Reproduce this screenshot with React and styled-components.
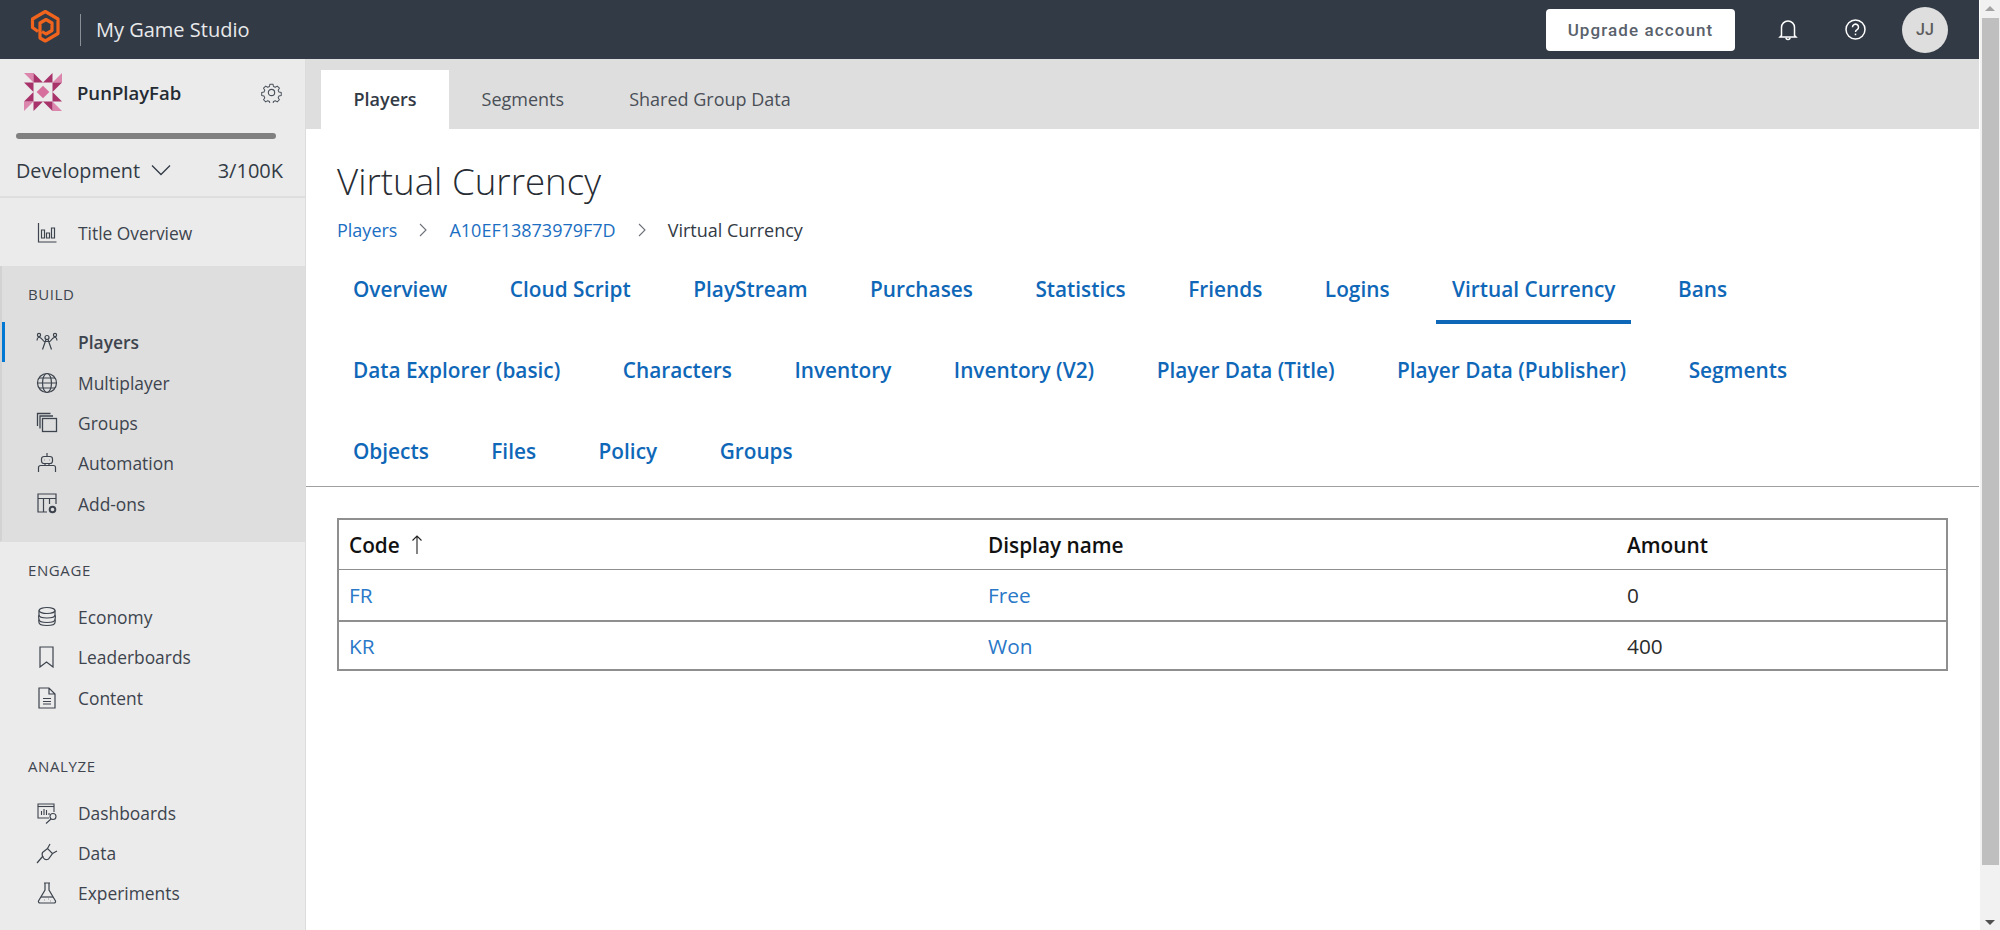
import { Fragment } from 'react';
import styled, { createGlobalStyle } from 'styled-components';

const GlobalStyle = createGlobalStyle`
  html, body {
    margin: 0;
    height: 100%;
    overflow: hidden;
    background: #fff;
    font-family: 'Open Sans', 'Noto Sans', sans-serif;
  }
  * {
    box-sizing: border-box;
  }
`;

const Page = styled.div`
  display: flex;
  width: 2000px;
  height: 930px;
  overflow: hidden;
`;

const Frame = styled.div`
  flex: 1;
  display: flex;
  flex-direction: column;
  min-width: 0;
`;

const TopBar = styled.header`
  height: 59px;
  flex: none;
  display: flex;
  align-items: center;
  background: #323a45;
  padding: 0 31px 0 26px;
`;

const BrandMark = styled.svg`
  flex: none;
  margin-bottom: 3px;
`;

const BrandDivider = styled.span`
  width: 1px;
  height: 32px;
  margin: 0 15px 0 14px;
  background: #8b9097;
`;

const StudioName = styled.span`
  flex: 1;
  color: #e8e9eb;
  font-size: 20px;
`;

const UpgradeButton = styled.button`
  width: 189px;
  height: 42px;
  border: 0;
  border-radius: 4px;
  background: #fff;
  color: #59616b;
  font-family: 'Roboto', sans-serif;
  font-size: 17px;
  font-weight: 500;
  letter-spacing: 1.1px;
`;

const TopIcon = styled.span`
  display: flex;
  margin-left: ${(p) => p.$gap}px;
  color: #fff;
`;

const Avatar = styled.span`
  width: 46px;
  height: 46px;
  margin-left: 36px;
  display: flex;
  align-items: center;
  justify-content: center;
  border-radius: 50%;
  background: #dedede;
  color: #5c5c5c;
  font-family: 'Roboto', sans-serif;
  font-size: 16px;
  font-weight: 500;
`;

const Body = styled.div`
  flex: 1;
  display: flex;
  min-height: 0;
`;

const Sidebar = styled.aside`
  width: 306px;
  flex: none;
  background: #ebebeb;
  border-right: 1px solid #dcdcdc;
  color: #323a45;
`;

const TitleBox = styled.div`
  height: 139px;
  border-bottom: 2px solid #dedede;
  padding: 14px 16px 0;
`;

const TitleRow = styled.div`
  display: flex;
  align-items: center;
  height: 38px;
  padding: 0 7px 0 8px;
`;

const TitleName = styled.span`
  flex: 1;
  margin-left: 15px;
  font-size: 18.5px;
  font-weight: 600;
  color: #252b33;
`;

const ProgressBar = styled.div`
  width: 260px;
  height: 5.5px;
  margin-top: 22px;
  border-radius: 3px;
  background: #808080;
`;

const EnvRow = styled.div`
  display: flex;
  align-items: center;
  margin-top: 18px;
  font-size: 19.8px;
  line-height: 27px;
`;

const EnvName = styled.span`
  margin-right: 10px;
`;

const EnvCount = styled.span`
  margin-left: auto;
  padding-right: 6px;
  font-size: 20px;
`;

const Section = styled.div`
  padding: ${(p) => p.$pad};
  background: ${(p) => (p.$active ? '#dedede' : 'transparent')};
  border-left: ${(p) => (p.$active ? '2px solid #d2d2d2' : '0')};
  border-bottom: ${(p) => (p.$active ? '2px solid #dedede' : '0')};
`;

const SectionLabel = styled.div`
  height: 20px;
  line-height: 20px;
  margin: 0 0 ${(p) => p.$below}px ${(p) => p.$left}px;
  font-size: 15px;
  letter-spacing: 0.6px;
  color: #3f4650;
`;

const NavItem = styled.div`
  position: relative;
  height: 40.3px;
  display: flex;
  align-items: center;
  padding-left: ${(p) => p.$left}px;
  font-size: 17.4px;
  font-weight: ${(p) => (p.$selected ? 600 : 400)};
  color: #3d444e;

  &::before {
    content: '';
    display: ${(p) => (p.$selected ? 'block' : 'none')};
    position: absolute;
    left: 0;
    top: 0;
    width: 3px;
    height: 40px;
    background: #0078d4;
  }
`;

const NavIcon = styled.span`
  width: 22px;
  height: 22px;
  display: flex;
  margin-right: 20px;
  color: #3d444e;
`;

const Main = styled.main`
  flex: 1;
  min-width: 0;
  background: #fff;
`;

const SubTabs = styled.div`
  height: 70px;
  display: flex;
  align-items: flex-end;
  padding-left: 15px;
  background: #dedede;
`;

const SubTab = styled.div`
  height: 59px;
  display: flex;
  align-items: center;
  padding: 0 32.5px 2px;
  background: ${(p) => (p.$selected ? '#fff' : 'transparent')};
  font-size: 18px;
  font-weight: ${(p) => (p.$selected ? 600 : 400)};
  color: ${(p) => (p.$selected ? '#323a45' : '#4a4f57')};
`;

const Heading = styled.div`
  padding: 26px 31px 0;
`;

const Title = styled.h1`
  margin: 0;
  font-size: 36.7px;
  line-height: 52px;
  font-weight: 300;
  color: #272c33;
`;

const Crumbs = styled.nav`
  display: flex;
  align-items: center;
  height: 24px;
  margin-top: 11px;
  font-size: 18px;
`;

const Crumb = styled.span`
  color: ${(p) => (p.$current ? '#323a45' : '#1b6ec2')};
`;

const CrumbSep = styled.span`
  display: flex;
  width: 52px;
  justify-content: center;
  color: #6b7079;
`;

const TabGroup = styled.div`
  display: flex;
  flex-wrap: wrap;
  align-content: flex-start;
  height: 245px;
  padding: 18px 31px 0;
  border-bottom: 1px solid #a0a0a0;
`;

const PageTab = styled.div`
  height: 64px;
  margin: 0 30.5px 17px 0;
  display: flex;
  align-items: center;
  padding: 0 16px 2px;
  font-size: 20.8px;
  font-weight: 600;
  color: #0f67b8;
  border-bottom: 4px solid ${(p) => (p.$selected ? '#0f67b8' : 'transparent')};
`;

const TabBreak = styled.div`
  flex-basis: 100%;
  height: 0;
`;

const TableWrap = styled.div`
  padding: 31px 31px 0;
`;

const Table = styled.div`
  border: 2px solid #8f8f8f;
`;

const Row = styled.div`
  display: grid;
  grid-template-columns: 639px 639px 1fr;
  height: ${(p) => p.$h}px;
  align-items: center;
  padding-left: 10px;
  border-top: ${(p) => (p.$line ? `${p.$line}px solid #8f8f8f` : '0')};
`;

const HeadCell = styled.div`
  display: flex;
  align-items: center;
  font-size: 20.8px;
  font-weight: 600;
  color: #111;
`;

const SortArrow = styled.span`
  display: flex;
  margin-left: 4px;
  color: #222;
`;

const LinkCell = styled.div`
  font-size: 20.8px;
  color: #2a78c8;
`;

const ValueCell = styled.div`
  font-size: 20.8px;
  color: #2b2b2b;
`;

const Scrollbar = styled.div`
  width: 21px;
  flex: none;
  display: flex;
  flex-direction: column;
  align-items: center;
  background: #f1f1f1;
  border-left: 1px solid #fff;
`;

const ScrollUp = styled.span`
  flex: none;
  height: 5px;
  width: 0;
  margin: 6px 0 7px;
  border-left: 5px solid transparent;
  border-right: 5px solid transparent;
  border-bottom: 5px solid #a3a3a3;
`;

const ScrollThumb = styled.span`
  flex: none;
  width: 17px;
  height: 847px;
  background: #bfbfbf;
`;

const ScrollDown = styled.span`
  flex: none;
  height: 5px;
  width: 0;
  margin-top: 55px;
  border-left: 5px solid transparent;
  border-right: 5px solid transparent;
  border-top: 5px solid #505050;
`;

const Line = ({ size = 22, children, sw = 1.2 }) => (
  <svg width={size} height={size} viewBox="0 0 22 22" fill="none" stroke="currentColor" strokeWidth={sw}>
    {children}
  </svg>
);

const BrandLogo = () => (
  <BrandMark width="40" height="44" viewBox="26 6 40 44" fill="none" stroke="#f0641e" strokeWidth="3.2" strokeLinejoin="round">
    <path d="M38 31.5L32.5 27.5V19L45.3 11.5 58 19V33.5L45.3 41 40 38V23L46 19.5 52 23V30.5L46 34 42 31.5" />
  </BrandMark>
);

const TitleLogo = () => (
  <svg width="38" height="38" viewBox="0 0 38 38">
    <rect x="14.5" y="14.5" width="9" height="9" fill="#d66f9c" transform="rotate(45 19 19)" />
    {[0, 90, 180, 270].map((deg) => (
      <g key={deg} transform={`rotate(${deg} 19 19)`}>
        <path d="M0 0H9.5V9.5Z" fill="#dd86ad" />
        <path d="M9.5 0L19 9.5H9.5Z" fill="#a8336a" />
        <path d="M0 9.5H9.5V19Z" fill="#a8336a" />
      </g>
    ))}
  </svg>
);

const Gear = () => (
  <svg width="21" height="21" viewBox="0 0 24 24" fill="none" stroke="#4b525c" strokeWidth="1.3" strokeLinejoin="round">
    <path d="M10 1.5h4l.6 3 2.3 1 2.6-1.6 2.8 2.8-1.6 2.6 1 2.3 3 .6v4l-3 .6-1 2.3 1.6 2.6-2.8 2.8-2.6-1.6-2.3 1-.6 3h-4l-.6-3-2.3-1-2.6 1.6-2.8-2.8 1.6-2.6-1-2.3-3-.6v-4l3-.6 1-2.3-1.6-2.6 2.8-2.8 2.6 1.6 2.3-1z" transform="translate(1.4 1.2) scale(0.88)" />
    <circle cx="12" cy="12" r="3.6" />
  </svg>
);

const Chevron = () => (
  <svg width="22" height="14" viewBox="0 0 22 14" fill="none" stroke="#323a45" strokeWidth="1.3">
    <path d="M2 2.5l9 9 9-9" />
  </svg>
);

const CrumbChevron = () => (
  <svg width="10" height="14" viewBox="0 0 10 14" fill="none" stroke="currentColor" strokeWidth="1.1">
    <path d="M2 1l6 6-6 6" />
  </svg>
);

const Bell = () => (
  <svg width="20" height="22" viewBox="0 0 20 22" fill="none" stroke="currentColor" strokeWidth="1.5">
    <path d="M3.5 16.5V8.5a6.5 6.5 0 0 1 13 0v8l1.5 1.5H2z" />
    <path d="M8 18.5a2 2 0 0 0 4 0" />
  </svg>
);

const Help = () => (
  <svg width="21" height="21" viewBox="0 0 21 21" fill="none" stroke="currentColor" strokeWidth="1.5">
    <circle cx="10.5" cy="10.5" r="9.5" />
    <path d="M7.5 8.2a3 3 0 1 1 4.6 2.5c-1 .6-1.6 1.2-1.6 2.3" />
    <path d="M10.5 14.6v1.6" />
  </svg>
);

const icons = {
  overview: (
    <Line>
      <path d="M2.5 1v19h18" />
      <path d="M5.5 16V8h3v8zM10.5 16V11h3v5zM15.5 16V6h3v10z" />
    </Line>
  ),
  players: (
    <Line>
      <circle cx="11" cy="6.5" r="2" />
      <path d="M6.5 18.500l3.500-10M15.500 18.500l-3.500-10M8 10.500h6" />
      <circle cx="3" cy="4" r="1.600" />
      <circle cx="19" cy="4" r="1.600" />
      <path d="M1 9.500c0-1.500 .6-3 2-3.500 1.500 .3 3 2 5 4.500M21 9.500c0-1.500-.6-3-2-3.500-1.500 .3-3 2-5 4.500" />
    </Line>
  ),
  globe: (
    <Line>
      <circle cx="11" cy="11" r="9.5" />
      <ellipse cx="11" cy="11" rx="4.5" ry="9.5" />
      <path d="M1.5 11h19M3 6h16M3 16h16" />
    </Line>
  ),
  groups: (
    <Line sw={1.3}>
      <path d="M1.5 14V1.500h13M4 16.500V4h13" />
      <rect x="6.500" y="6.500" width="14" height="13" />
    </Line>
  ),
  robot: (
    <Line>
      <path d="M11 1v3" />
      <rect x="5.500" y="4.500" width="11" height="7" rx="2.500" />
      <path d="M8.500 8h.5M13 8h.5M9 11.500v2h4v-2M2.500 20v-4.500a2 2 0 0 1 2-2h13a2 2 0 0 1 2 2V20" />
    </Line>
  ),
  addons: (
    <Line>
      <path d="M11 19H2V1h18v10M2 5.500h18M7.500 5.500V19M13.500 5.500V11" />
      <circle cx="16.500" cy="16.500" r="2.800" strokeWidth="2" />
    </Line>
  ),
  economy: (
    <Line>
      <ellipse cx="11" cy="4.500" rx="8" ry="3" />
      <path d="M3 4.500v4.500c0 1.700 3.600 3 8 3s8-1.300 8-3V4.500" />
      <path d="M3 9c-1 2 0 3 0 4.500 0 1.700 3.600 3 8 3s8-1.300 8-3c0-1.500 1-2.500 0-4.500" />
      <path d="M3 13.500c-.5 1.500 0 2 0 3 0 1.700 3.600 3 8 3s8-1.300 8-3c0-1 .5-1.500 0-3" />
    </Line>
  ),
  bookmark: (
    <Line>
      <path d="M4 1h13v20l-6.500-5L4 21z" />
    </Line>
  ),
  doc: (
    <Line>
      <path d="M3 1h10l6 6v14H3zM13 1v6h6" />
      <path d="M7 11.500h8M7 14.500h8M7 17h8" />
    </Line>
  ),
  dashboard: (
    <Line sw={1.1}>
      <path d="M13 16H2V2h16v8" />
      <path d="M2 4.500h16" />
      <path d="M5.500 13V9M8 13V7M10.500 13V8M13 13v-2" />
      <circle cx="17" cy="14.500" r="3" />
      <path d="M15 17l-5 4.500" />
    </Line>
  ),
  plug: (
    <Line>
      <path d="M1 21l6-7" />
      <path d="M6.500 10.500l5-4 5 5-4 5.500c-2 1-4 .5-5-1s-2-3.500-1-5.500z" />
      <path d="M11.500 6.500L14 2M16.500 11.500L21 9" />
    </Line>
  ),
  flask: (
    <Line>
      <path d="M8 1h6M9 1v7L2.500 19a1.500 1.500 0 0 0 1.500 2h14a1.500 1.500 0 0 0 1.500-2L13 8V1" />
      <path d="M5 15h12" />
      <path d="M8 18h.5M12 17h.5M14.500 19h.5" />
    </Line>
  ),
};

const buildItems = [
  { label: 'Players', icon: 'players', selected: true },
  { label: 'Multiplayer', icon: 'globe' },
  { label: 'Groups', icon: 'groups' },
  { label: 'Automation', icon: 'robot' },
  { label: 'Add-ons', icon: 'addons' },
];

const engageItems = [
  { label: 'Economy', icon: 'economy' },
  { label: 'Leaderboards', icon: 'bookmark' },
  { label: 'Content', icon: 'doc' },
];

const analyzeItems = [
  { label: 'Dashboards', icon: 'dashboard' },
  { label: 'Data', icon: 'plug' },
  { label: 'Experiments', icon: 'flask' },
];

const tabRows = [
  ['Overview', 'Cloud Script', 'PlayStream', 'Purchases', 'Statistics', 'Friends', 'Logins', 'Virtual Currency', 'Bans'],
  ['Data Explorer (basic)', 'Characters', 'Inventory', 'Inventory (V2)', 'Player Data (Title)', 'Player Data (Publisher)', 'Segments'],
  ['Objects', 'Files', 'Policy', 'Groups'],
];

const currencies = [
  { code: 'FR', name: 'Free', amount: 0 },
  { code: 'KR', name: 'Won', amount: 400 },
];

const NavList = ({ items, left = 36 }) =>
  items.map((item) => (
    <NavItem key={item.label} $selected={item.selected} $left={left}>
      <NavIcon>{icons[item.icon]}</NavIcon>
      {item.label}
    </NavItem>
  ));

const App = () => {
  return (
    <>
      <GlobalStyle />
      <Page>
        <Frame>
          <TopBar>
            <BrandLogo />
            <BrandDivider />
            <StudioName>My Game Studio</StudioName>
            <UpgradeButton>Upgrade account</UpgradeButton>
            <TopIcon $gap={43}>
              <Bell />
            </TopIcon>
            <TopIcon $gap={47}>
              <Help />
            </TopIcon>
            <Avatar>JJ</Avatar>
          </TopBar>
          <Body>
            <Sidebar>
              <TitleBox>
                <TitleRow>
                  <TitleLogo />
                  <TitleName>PunPlayFab</TitleName>
                  <Gear />
                </TitleRow>
                <ProgressBar />
                <EnvRow>
                  <EnvName>Development</EnvName>
                  <Chevron />
                  <EnvCount>3/100K</EnvCount>
                </EnvRow>
              </TitleBox>
              <Section $pad="15px 0 13px">
                <NavList items={[{ label: 'Title Overview', icon: 'overview' }]} />
              </Section>
              <Section $active $pad="18px 0 16px">
                <SectionLabel $below={18} $left={26}>BUILD</SectionLabel>
                <NavList items={buildItems} left={34} />
              </Section>
              <Section $pad="18px 0 0">
                <SectionLabel $below={17} $left={28}>ENGAGE</SectionLabel>
                <NavList items={engageItems} />
              </Section>
              <Section $pad="38px 0 0">
                <SectionLabel $below={17} $left={28}>ANALYZE</SectionLabel>
                <NavList items={analyzeItems} />
              </Section>
            </Sidebar>
            <Main>
              <SubTabs>
                <SubTab $selected>Players</SubTab>
                <SubTab>Segments</SubTab>
                <SubTab>Shared Group Data</SubTab>
              </SubTabs>
              <Heading>
                <Title>Virtual Currency</Title>
                <Crumbs>
                  <Crumb>Players</Crumb>
                  <CrumbSep>
                    <CrumbChevron />
                  </CrumbSep>
                  <Crumb>A10EF13873979F7D</Crumb>
                  <CrumbSep>
                    <CrumbChevron />
                  </CrumbSep>
                  <Crumb $current>Virtual Currency</Crumb>
                </Crumbs>
              </Heading>
              <TabGroup>
                {tabRows.map((row, i) => (
                  <Fragment key={row[0]}>
                    {row.map((tab) => (
                      <PageTab key={tab} $selected={i === 0 && tab === 'Virtual Currency'}>
                        {tab}
                      </PageTab>
                    ))}
                    <TabBreak />
                  </Fragment>
                ))}
              </TabGroup>
              <TableWrap>
                <Table>
                  <Row $h={49}>
                    <HeadCell>
                      Code
                      <SortArrow>
                        <svg width="24" height="24" viewBox="0 0 24 24" fill="none" stroke="currentColor" strokeWidth="1.1">
                          <path d="M13 21V3M8.5 7.500L13 3l4.500 4.500" />
                        </svg>
                      </SortArrow>
                    </HeadCell>
                    <HeadCell>Display name</HeadCell>
                    <HeadCell>Amount</HeadCell>
                  </Row>
                  {currencies.map((c, i) => (
                    <Row key={c.code} $h={i === 0 ? 51 : 49} $line={i === 0 ? 1 : 2}>
                      <LinkCell>{c.code}</LinkCell>
                      <LinkCell>{c.name}</LinkCell>
                      <ValueCell>{c.amount}</ValueCell>
                    </Row>
                  ))}
                </Table>
              </TableWrap>
            </Main>
          </Body>
        </Frame>
        <Scrollbar>
          <ScrollUp />
          <ScrollThumb />
          <ScrollDown />
        </Scrollbar>
      </Page>
    </>
  );
};

export default App;
